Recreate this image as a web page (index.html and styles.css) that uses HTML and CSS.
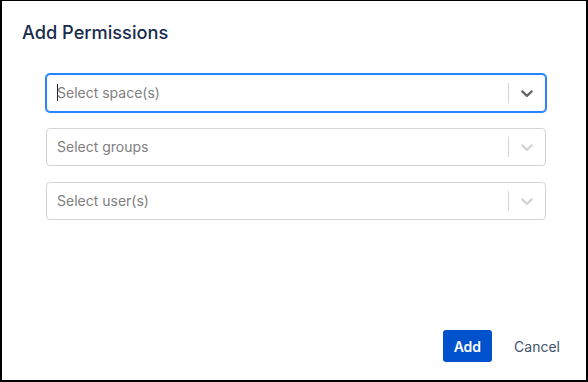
FILE: index.html
```
<!DOCTYPE html>
<html>
<head>
<meta charset="utf-8">
<link rel="stylesheet" href="styles.css">
</head>
<body>
<div class="dialog">
  <h1 class="title">Add Permissions</h1>
  <div class="form">
    <div class="select focused">
      <div class="value"><span class="caret"></span><span class="placeholder">Select space(s)</span></div>
      <span class="sep"></span>
      <span class="indicator"><svg viewBox="0 0 20 20" width="20" height="20"><path d="M4.516 7.548c0.436-0.446 1.043-0.481 1.576 0l3.908 3.747 3.908-3.747c0.533-0.481 1.141-0.446 1.574 0 0.436 0.445 0.408 1.197 0 1.615-0.406 0.418-4.695 4.502-4.695 4.502-0.217 0.223-0.502 0.335-0.787 0.335s-0.57-0.112-0.789-0.335c0 0-4.287-4.084-4.695-4.502s-0.436-1.17 0-1.615z"/></svg></span>
    </div>
    <div class="select">
      <div class="value"><span class="placeholder">Select groups</span></div>
      <span class="sep"></span>
      <span class="indicator"><svg viewBox="0 0 20 20" width="20" height="20"><path d="M4.516 7.548c0.436-0.446 1.043-0.481 1.576 0l3.908 3.747 3.908-3.747c0.533-0.481 1.141-0.446 1.574 0 0.436 0.445 0.408 1.197 0 1.615-0.406 0.418-4.695 4.502-4.695 4.502-0.217 0.223-0.502 0.335-0.787 0.335s-0.57-0.112-0.789-0.335c0 0-4.287-4.084-4.695-4.502s-0.436-1.17 0-1.615z"/></svg></span>
    </div>
    <div class="select">
      <div class="value"><span class="placeholder">Select user(s)</span></div>
      <span class="sep"></span>
      <span class="indicator"><svg viewBox="0 0 20 20" width="20" height="20"><path d="M4.516 7.548c0.436-0.446 1.043-0.481 1.576 0l3.908 3.747 3.908-3.747c0.533-0.481 1.141-0.446 1.574 0 0.436 0.445 0.408 1.197 0 1.615-0.406 0.418-4.695 4.502-4.695 4.502-0.217 0.223-0.502 0.335-0.787 0.335s-0.57-0.112-0.789-0.335c0 0-4.287-4.084-4.695-4.502s-0.436-1.17 0-1.615z"/></svg></span>
    </div>
  </div>
  <div class="footer">
    <button class="btn primary">Add</button>
    <button class="btn subtle">Cancel</button>
  </div>
</div>
</body>
</html>
```
FILE: styles.css
```
* { box-sizing: border-box; }
html, body { margin: 0; padding: 0; background: #fff; }
body { font-family: Inter, "Liberation Sans", sans-serif; }
.dialog {
  width: 588px;
  height: 382px;
  border-style: solid;
  border-color: #000;
  border-width: 1px 2px 2px 2px;
  background: #fff;
  display: flex;
  flex-direction: column;
}
.title {
  margin: 19px 0 0 20px;
  font-size: 18.2px;
  line-height: 24px;
  font-weight: 500;
  color: #172B4D;
}
.form {
  margin: 30px 0 0 44px;
  width: 500px;
  display: flex;
  flex-direction: column;
  gap: 16px;
}
.select {
  height: 38px;
  border: 1px solid #d4d4d4;
  border-radius: 4px;
  display: flex;
  align-items: center;
  background: #fff;
}
.select.focused {
  border-color: #2684FF;
  box-shadow: 0 0 0 1px #2684FF;
}
.value {
  flex: 1;
  padding: 1px 8px 2px 10px;
  font-size: 14px;
  display: flex;
  align-items: center;
}
.placeholder { color: #808080; }
.caret {
  display: inline-block;
  width: 1px;
  height: 17px;
  background: #222;
  margin-right: -1px;
}
.sep {
  align-self: stretch;
  width: 1px;
  margin: 8px 0;
  background: #d4d4d4;
}
.indicator {
  display: flex;
  padding: 8px;
  fill: #d4d4d4;
}
.focused .indicator { fill: #666; }
.footer {
  margin-top: auto;
  display: flex;
  justify-content: flex-end;
  gap: 12px;
  padding: 0 16px 18px 0;
}
.btn {
  height: 32px;
  border: none;
  border-radius: 3px;
  font-family: Inter, "Liberation Sans", sans-serif;
  font-size: 14px;
  font-weight: 400;
  padding: 0 10px;
  background: transparent;
}
.primary { background: #0052CC; color: #fff; padding: 0 11px; font-weight: 600; }
.subtle { color: #42526E; }
```
